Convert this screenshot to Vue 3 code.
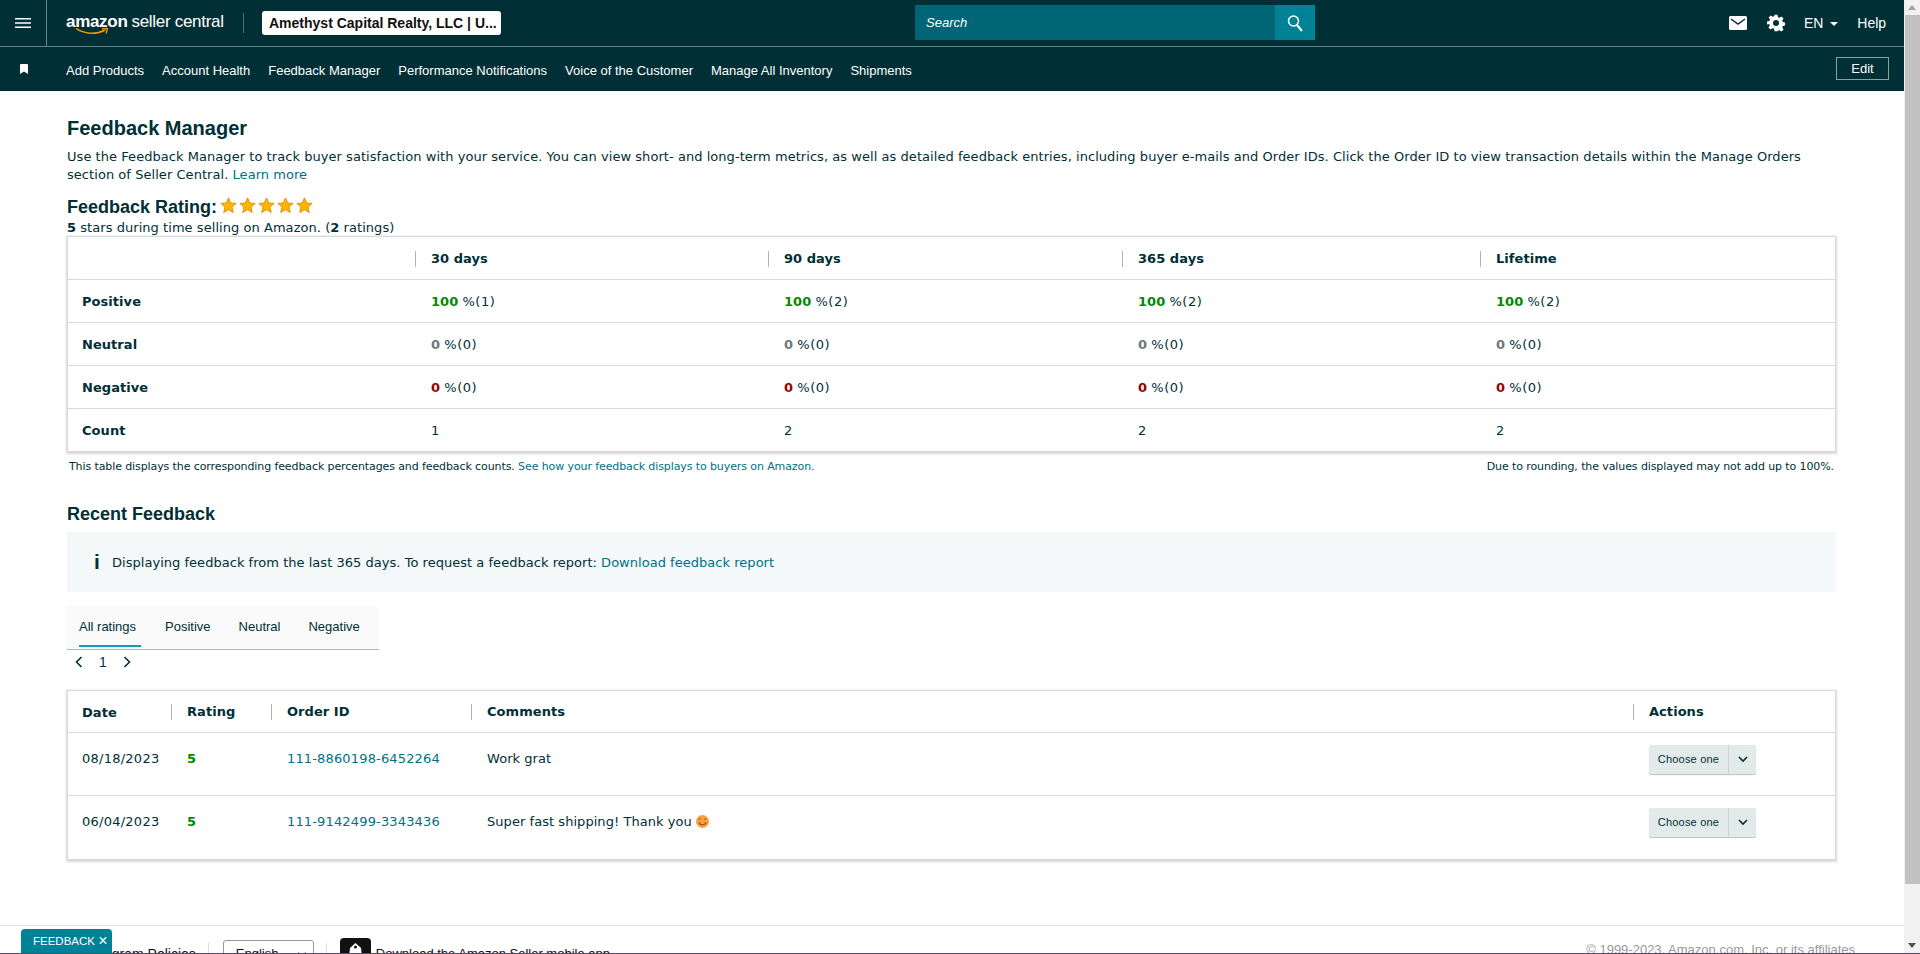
<template>
  <div class="page">
    <div class="main">
      <header class="topbar">
        <button class="menu-btn" aria-label="menu">
          <svg width="16" height="10" viewBox="0 0 16 10"><path d="M0 .75h16M0 5h16M0 9.250h16" stroke="#fff" stroke-width="1.500" /></svg>
        </button>
        <div class="logo">
          <span class="logo-amazon">amazon</span>
          <span class="logo-seller">seller central</span>
          <svg class="smile" width="33" height="7" viewBox="0 0 33 7"><path d="M1 .5c8 5.500 20 6.500 29 1.500" fill="none" stroke="#f90" stroke-width="1.500" /><path d="M27 .5l5.500 0-1.500 5" fill="none" stroke="#f90" stroke-width="1.300" /></svg>
        </div>
        <div class="account">Amethyst Capital Realty, LLC | U...</div>
        <div class="search-wrap">
          <div class="search">
            <span class="search-text">Search</span>
            <span class="search-btn">
              <svg width="18" height="18" viewBox="0 0 18 18"><circle cx="7.500" cy="7" r="5" fill="none" stroke="#fff" stroke-width="1.600" /><path d="M11 11l5 6" stroke="#fff" stroke-width="2" /></svg>
            </span>
          </div>
        </div>
        <div class="top-right">
          <svg width="18" height="14" viewBox="0 0 18 14"><path d="M1.500 0h15A1.500 1.500 0 0 1 18 1.500v11a1.500 1.500 0 0 1-1.500 1.500h-15A1.500 1.500 0 0 1 0 12.500v-11A1.500 1.500 0 0 1 1.500 0z" fill="#fff" /><path d="M2 3l7 5 7-5" fill="none" stroke="#002f36" stroke-width="1.500" /></svg>
          <svg width="18" height="18" viewBox="0 0 24 24"><path fill="#fff" fill-rule="evenodd" d="M10 1h4l.6 3.200 2 .8L19.300 3.200l2.800 2.800-1.800 2.700.8 2 3.200.6v4l-3.200.6-.8 2 1.800 2.700-2.800 2.800-2.700-1.800-2 .8L14 23h-4l-.6-3.200-2-.8-2.700 1.800-2.800-2.800 1.800-2.700-.8-2L0 14v-4l3.200-.6.800-2L2.200 4.700 5 2l2.700 1.800 2-.8zM12 8a4 4 0 1 0 0 8 4 4 0 0 0 0-8z" /></svg>
          <span class="lang">EN <i class="caret"></i></span>
          <span class="help">Help</span>
        </div>
      </header>

      <nav class="navbar">
        <svg class="bookmark" width="8" height="10" viewBox="0 0 8 10"><path d="M0 1a1 1 0 0 1 1-1h6a1 1 0 0 1 1 1v9L4 7.500 0 10z" fill="#fff" /></svg>
        <a v-for="item in navItems" :key="item" class="nav-link">{{ item }}</a>
        <button class="edit-btn">Edit</button>
      </nav>

      <main class="content">
        <h1>Feedback Manager</h1>
        <p class="intro">
          Use the Feedback Manager to track buyer satisfaction with your service. You can view short- and long-term metrics, as well as detailed feedback entries, including buyer e-mails and Order IDs. Click the Order ID to view transaction details within the Manage Orders section of Seller Central.
          <a class="link">Learn more</a>
        </p>
        <div class="rating-head">
          <h2>Feedback Rating:</h2>
          <div class="stars">
            <svg v-for="n in 5" :key="n" width="17" height="17" viewBox="0 0 20 20"><path d="M10 1l2.600 6 6.400.6-4.800 4.300 1.400 6.400L10 14.900l-5.600 3.400 1.400-6.400L1 7.600 7.400 7z" fill="#ffb400" stroke="#d98a00" stroke-width="1" /></svg>
          </div>
        </div>
        <div class="rating-sub"><b>5</b> stars during time selling on Amazon. (<b>2</b> ratings)</div>

        <div class="card">
          <table class="metrics">
            <colgroup>
              <col style="width: 347px" />
              <col style="width: 353px" />
              <col style="width: 354px" />
              <col style="width: 358px" />
              <col />
            </colgroup>
            <thead>
              <tr>
                <th></th>
                <th v-for="p in periods" :key="p"><span class="sep">{{ p }}</span></th>
              </tr>
            </thead>
            <tbody>
              <tr v-for="row in metricRows" :key="row.name">
                <td class="row-name">{{ row.name }}</td>
                <td v-for="(v, i) in row.values" :key="i">
                  <b :class="row.color">{{ row.pct }}</b> <span class="pct">%({{ v }})</span>
                </td>
              </tr>
              <tr>
                <td class="row-name">Count</td>
                <td v-for="(c, i) in counts" :key="i">{{ c }}</td>
              </tr>
            </tbody>
          </table>
        </div>
        <div class="table-note">
          <span>This table displays the corresponding feedback percentages and feedback counts. <a class="link">See how your feedback displays to buyers on Amazon.</a></span>
          <span>Due to rounding, the values displayed may not add up to 100%.</span>
        </div>

        <h2 class="recent-title">Recent Feedback</h2>
        <div class="info-box">
          <span class="info-i">i</span>
          <span>Displaying feedback from the last 365 days. To request a feedback report: <a class="link">Download feedback report</a></span>
        </div>

        <div class="tabs">
          <span v-for="(t, i) in tabs" :key="t" class="tab" :class="{ active: i === 0 }">{{ t }}</span>
        </div>
        <div class="pager">
          <svg width="8" height="12" viewBox="0 0 8 12"><path d="M6.500 1L1.500 6l5 5" fill="none" stroke="#002f36" stroke-width="1.600" /></svg>
          <span>1</span>
          <svg width="8" height="12" viewBox="0 0 8 12"><path d="M1.500 1l5 5-5 5" fill="none" stroke="#002f36" stroke-width="1.600" /></svg>
        </div>

        <div class="card">
          <table class="feedback">
            <colgroup>
              <col style="width: 103px" />
              <col style="width: 100px" />
              <col style="width: 200px" />
              <col />
              <col style="width: 202px" />
            </colgroup>
            <thead>
              <tr>
                <th class="first">Date</th>
                <th><span class="sep">Rating</span></th>
                <th><span class="sep">Order ID</span></th>
                <th><span class="sep">Comments</span></th>
                <th><span class="sep">Actions</span></th>
              </tr>
            </thead>
            <tbody>
              <tr v-for="f in feedback" :key="f.order">
                <td class="first date">{{ f.date }}</td>
                <td><b class="green">{{ f.rating }}</b></td>
                <td><a class="link order">{{ f.order }}</a></td>
                <td>{{ f.comment }}<svg v-if="f.smile" class="emoji" width="13" height="13" viewBox="0 0 13 13"><circle cx="6.500" cy="6.500" r="6.500" fill="#f7a23b" /><path d="M2.500 4.500l1.200-1 1.200 1M8.100 4.500l1.200-1 1.200 1" fill="none" stroke="#a34e2a" stroke-width="1" /><path d="M3 7.500c1 3 6 3 7 0" fill="none" stroke="#a34e2a" stroke-width="1.200" /></svg></td>
                <td>
                  <div class="choose">
                    <span class="choose-label">Choose one</span>
                    <span class="choose-arrow">
                      <svg width="10" height="7" viewBox="0 0 10 7"><path d="M1 1l4 4 4-4" fill="none" stroke="#002f36" stroke-width="1.600" /></svg>
                    </span>
                  </div>
                </td>
              </tr>
            </tbody>
          </table>
        </div>
      </main>

      <footer class="footer">
        <span class="foot-policy">Program Policies</span>
        <span class="foot-sep"></span>
        <span class="foot-lang">English <svg width="10" height="7" viewBox="0 0 10 7"><path d="M1 1l4 4 4-4" fill="none" stroke="#111" stroke-width="2" /></svg></span>
        <span class="foot-sep"></span>
        <svg class="foot-icon" width="31" height="31" viewBox="0 0 31 31"><rect width="31" height="31" rx="4" fill="#111" /><path d="M10 10l5.500-5 5.500 5 2 18H8z" fill="#fff" /><circle cx="15.500" cy="9" r="1.500" fill="#111" /></svg>
        <span class="foot-app">Download the Amazon Seller mobile app</span>
        <span class="foot-copy">© 1999-2023, Amazon.com, Inc. or its affiliates</span>
      </footer>

      <div class="feedback-tab">FEEDBACK <span class="close-x">×</span></div>
    </div>

    <div class="scrollbar">
      <i class="arrow up"></i>
      <div class="thumb"></div>
      <i class="arrow down"></i>
    </div>
    <div class="bottom-line"></div>
  </div>
</template>

<script setup>
const navItems = [
  'Add Products',
  'Account Health',
  'Feedback Manager',
  'Performance Notifications',
  'Voice of the Customer',
  'Manage All Inventory',
  'Shipments'
]

const periods = ['30 days', '90 days', '365 days', 'Lifetime']

const metricRows = [
  { name: 'Positive', pct: 100, color: 'green', values: [1, 2, 2, 2] },
  { name: 'Neutral', pct: 0, color: 'grey', values: [0, 0, 0, 0] },
  { name: 'Negative', pct: 0, color: 'red', values: [0, 0, 0, 0] }
]

const counts = [1, 2, 2, 2]

const tabs = ['All ratings', 'Positive', 'Neutral', 'Negative']

const feedback = [
  { date: '08/18/2023', rating: 5, order: '111-8860198-6452264', comment: 'Work grat', smile: false },
  { date: '06/04/2023', rating: 5, order: '111-9142499-3343436', comment: 'Super fast shipping! Thank you ', smile: true }
]
</script>

<style>
html,
body {
  margin: 0;
  overflow: hidden;
}
</style>

<style scoped>
.page {
  position: relative;
  display: flex;
  width: 1920px;
  height: 954px;
  overflow: hidden;
  background: #fff;
  color: #002f36;
  font-family: "DejaVu Sans", Verdana, sans-serif;
  font-size: 13px;
  letter-spacing: 0.05px;
}

.main {
  position: relative;
  flex: 1;
  min-width: 0;
  display: flex;
  flex-direction: column;
}

.topbar {
  display: flex;
  align-items: center;
  height: 45px;
  padding-bottom: 1px;
  background: #002f36;
  border-bottom: 1px solid #6b8388;
  flex-shrink: 0;
  color: #fff;
  font-family: "Liberation Sans", Arial, sans-serif;
  letter-spacing: 0;
}

.menu-btn {
  display: flex;
  align-items: center;
  justify-content: center;
  align-self: flex-start;
  width: 47px;
  height: 46px;
  padding: 0;
  background: none;
  border: none;
  border-right: 1px solid #6b8388;
}

.logo {
  position: relative;
  width: 159px;
  height: 20px;
  margin-left: 19px;
  padding-right: 18px;
  border-right: 1px solid #4d6c71;
  white-space: nowrap;
  font-size: 17px;
  line-height: 18px;
}

.logo-amazon {
  font-weight: 700;
  letter-spacing: -0.3px;
}

.logo-seller {
  margin-left: 4px;
  letter-spacing: -0.3px;
}

.smile {
  position: absolute;
  left: 9px;
  top: 15px;
}

.account {
  width: 239px;
  height: 24px;
  margin-left: 18px;
  padding-left: 7px;
  box-sizing: border-box;
  background: #fff;
  border-radius: 3px;
  color: #111;
  font-size: 14px;
  font-weight: 700;
  line-height: 24px;
  white-space: nowrap;
}

.search-wrap {
  margin-left: 414px;
}

.search {
  display: flex;
  align-items: center;
  width: 400px;
  height: 35px;
  background: #006574;
}

.search-text {
  flex: 1;
  padding-left: 11px;
  font-size: 13px;
  font-style: italic;
}

.search-btn {
  display: flex;
  align-items: center;
  justify-content: center;
  width: 40px;
  height: 35px;
  background: #008296;
}

.top-right {
  display: flex;
  align-items: center;
  margin-left: 414px;
  font-size: 14px;
}

.top-right svg + svg {
  margin-left: 20px;
}

.lang {
  margin-left: 19px;
}

.caret {
  display: inline-block;
  margin-left: 3px;
  border-top: 4px solid #fff;
  border-left: 4px solid transparent;
  border-right: 4px solid transparent;
  vertical-align: 2px;
}

.help {
  margin-left: 19px;
}

.navbar {
  position: relative;
  display: flex;
  align-items: center;
  height: 42px;
  padding: 2px 0 0 20px;
  background: #002f36;
  flex-shrink: 0;
  color: #fff;
  font-family: "Liberation Sans", Arial, sans-serif;
  font-size: 13px;
  letter-spacing: 0;
}

.bookmark {
  margin-right: 38px;
  margin-top: -3px;
}

.nav-link {
  margin-right: 18px;
  white-space: nowrap;
}

.edit-btn {
  align-self: flex-start;
  margin: 8px 15px 0 auto;
  width: 53px;
  height: 23px;
  padding: 0;
  background: none;
  border: 1px solid #88a0a4;
  color: #fff;
  font-family: inherit;
  font-size: 13px;
}

.content {
  flex: 1;
  min-height: 0;
  padding: 25px 68px 0 67px;
}

h1 {
  margin: 0;
  font-family: "Liberation Sans", Arial, sans-serif;
  font-size: 20px;
  font-weight: 700;
  line-height: 24px;
  letter-spacing: 0;
}

.intro {
  margin: 8px 0 0;
  line-height: 18px;
}

.link {
  color: #007185;
}

.rating-head {
  display: flex;
  align-items: center;
  margin-top: 12px;
  height: 22px;
}

h2 {
  margin: 0;
  font-family: "Liberation Sans", Arial, sans-serif;
  font-size: 18px;
  font-weight: 700;
  line-height: 24px;
  letter-spacing: 0;
}

.stars {
  display: flex;
  gap: 2px;
  margin-left: 3px;
  margin-top: -4px;
}

.rating-sub {
  margin-top: 2px;
  line-height: 16px;
}

.card {
  background: #fff;
  border: 1px solid #d5dbdb;
  box-shadow: 0 1px 2px 1px rgba(0, 0, 0, 0.15);
}

table {
  width: 100%;
  border-collapse: collapse;
  table-layout: fixed;
}

th {
  height: 42px;
  padding: 2px 0 0;
  box-sizing: border-box;
  text-align: left;
  font-weight: 700;
}

td {
  padding: 2px 0 0 16px;
  height: 40px;
  border-top: 1px solid #d5dbdb;
}

.metrics td:first-child {
  padding-left: 14px;
}

.pct {
  letter-spacing: 0.5px;
}

.sep {
  display: block;
  padding-left: 15px;
  border-left: 1px solid #aab7b8;
  line-height: 16px;
}

.row-name {
  font-weight: 700;
}

.green {
  color: #008a00;
}

.grey {
  color: #6c7778;
}

.red {
  color: #990000;
}

.table-note {
  display: flex;
  justify-content: space-between;
  margin-top: 8px;
  padding: 0 2px;
  font-size: 11px;
  line-height: 14px;
  letter-spacing: -0.1px;
}

.recent-title {
  margin-top: 28px;
}

.info-box {
  display: flex;
  align-items: center;
  height: 58px;
  margin-top: 6px;
  padding: 2px 0 0 27px;
  background: #f5f8f8;
  letter-spacing: 0.03px;
}

.info-i {
  width: 18px;
  font-family: "Liberation Sans", Arial, sans-serif;
  font-size: 21px;
  font-weight: 700;
  line-height: 20px;
  margin-top: -2px;
}

.tabs {
  display: flex;
  width: 312px;
  height: 44px;
  margin-top: 14px;
  padding-left: 12px;
  box-sizing: border-box;
  background: #fafafa;
  border-bottom: 1px solid #aab7b8;
  font-family: "Liberation Sans", Arial, sans-serif;
  font-size: 13px;
  line-height: 41px;
  letter-spacing: 0;
}

.tab {
  flex: none;
  height: 39px;
  margin-right: 28px;
  white-space: nowrap;
}

.tab.active {
  width: 62px;
  margin-right: 24px;
  border-bottom: 2px solid #00a1b3;
}

.pager {
  display: flex;
  align-items: center;
  height: 24px;
  padding-left: 8px;
  gap: 16px;
  font-family: "Liberation Sans", Arial, sans-serif;
  font-size: 14px;
}

.pager + .card {
  margin-top: 16px;
}

.feedback td {
  height: 63px;
  vertical-align: top;
  padding-top: 18px;
  box-sizing: border-box;
}

.feedback .first {
  padding-left: 14px;
}

.date {
  letter-spacing: 0.25px;
}

.order {
  letter-spacing: 0.15px;
}

.emoji {
  vertical-align: -2px;
}

.choose {
  display: flex;
  width: 107px;
  height: 29px;
  margin-top: -6px;
  background: #e3eaea;
  border-radius: 2px;
  box-shadow: 0 1px 1px rgba(0, 0, 0, 0.25);
  font-family: "Liberation Sans", Arial, sans-serif;
  font-size: 11px;
  letter-spacing: 0.2px;
}

.choose-label {
  width: 79px;
  line-height: 28px;
  text-align: center;
  border-right: 1px solid #ccd5d5;
}

.choose-arrow {
  display: flex;
  flex: 1;
  align-items: center;
  justify-content: center;
}

.footer {
  display: flex;
  align-items: flex-start;
  height: 29px;
  margin-top: auto;
  overflow: hidden;
  flex-shrink: 0;
  border-top: 1px solid #e5e5e5;
  box-sizing: border-box;
  font-family: "Liberation Sans", Arial, sans-serif;
  font-size: 14px;
  line-height: 16px;
  letter-spacing: 0;
  color: #111;
}

.foot-policy {
  margin-left: 90px;
  padding-top: 20px;
  white-space: nowrap;
}

.foot-sep {
  width: 1px;
  height: 12px;
  margin: 17px 0 0 12px;
  background: #ddd;
}

.foot-lang {
  display: flex;
  justify-content: space-between;
  flex: none;
  width: 91px;
  height: 28px;
  margin: 14px 0 0 14px;
  padding: 5px 6px 0 12px;
  box-sizing: border-box;
  border: 1px solid #999;
  border-radius: 3px;
  font-size: 13px;
}

.foot-lang svg {
  margin-top: 6px;
}

.foot-icon {
  flex: none;
  margin: 12px 0 0 13px;
}

.foot-app {
  margin-left: 5px;
  padding-top: 20px;
  font-size: 13px;
  white-space: nowrap;
}

.foot-copy {
  margin-left: auto;
  margin-right: 49px;
  padding-top: 16px;
  color: #999;
  font-size: 13px;
  white-space: nowrap;
}

.feedback-tab {
  position: absolute;
  left: 21px;
  top: 929px;
  width: 91px;
  height: 25px;
  padding-left: 12px;
  box-sizing: border-box;
  background: #008296;
  border-radius: 4px 4px 0 0;
  color: #fff;
  font-family: "Liberation Sans", Arial, sans-serif;
  font-size: 11.500px;
  line-height: 25px;
  letter-spacing: 0;
}

.close-x {
  font-size: 16px;
  line-height: 14px;
  vertical-align: -1px;
}

.scrollbar {
  display: flex;
  flex-direction: column;
  width: 16px;
  flex-shrink: 0;
  background: #f1f1f1;
}

.thumb {
  flex: none;
  width: 15px;
  height: 869px;
  margin-left: 1px;
  background: #c1c1c1;
}

.arrow {
  display: block;
  width: 0;
  height: 0;
  margin: 5px auto;
  border-left: 4px solid transparent;
  border-right: 4px solid transparent;
}

.arrow.up {
  border-bottom: 5px solid #a3a3a3;
}

.arrow.down {
  margin-top: auto;
  margin-bottom: 6px;
  border-top: 5px solid #505050;
}

.bottom-line {
  position: absolute;
  left: 0;
  right: 0;
  bottom: 0;
  height: 1px;
  background: #5b4a66;
}
</style>
